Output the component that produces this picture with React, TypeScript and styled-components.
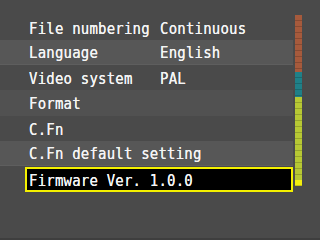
import styled, { createGlobalStyle } from 'styled-components';

const Global = createGlobalStyle`
 html, body { margin: 0; padding: 0; background: #4a4a4a; }
`

const Screen = styled.div`
 width: 320px;
 height: 240px;
 background: #4a4a4a;
 display: flex;
 padding-top: 15px;
 box-sizing: border-box;
 overflow: hidden;
 border-bottom: 2px solid #3e3e3e;
 font-family: 'DejaVu Sans Mono', 'Liberation Mono', monospace;
 font-size: 14px;
 letter-spacing: 0.2px;
 color: #f4f4f4;
`

const List = styled.div`
 width: 293px;
 display: flex;
 flex-direction: column;
`

const Row = styled.div<{ $shade: string; $h: number }>`
 height: ${p => p.$h}px;
 background: ${p => p.$shade};
 display: grid;
 grid-template-columns: 131px 1fr;
 align-items: center;
 padding-left: 29px;
 white-space: pre;
 border-bottom: ${p => p.$shade === '#575757' ? '1px solid #5e5e5e' : 'none'};
 box-sizing: border-box;
`

const Text = styled.span`
 display: inline-block;
 transform: scaleY(1.18);
 transform-origin: left center;
 text-shadow: 0 0 0.5px #ffffff;
`

const Selected = styled.div`
 margin-left: 25px;
 width: 268px;
 height: 25px;
 margin-top: 1px;
 box-sizing: border-box;
 border: 2px solid #f4f000;
 background: #000;
 padding-left: 2px;
 display: flex;
 align-items: center;
 white-space: pre;
`

const Scroll = styled.div`
 margin-left: 2px;
 width: 7px;
 display: flex;
 flex-direction: column;
`

const Seg = styled.div<{ $color: string; $h: number }>`
 height: ${p => p.$h}px;
 background: repeating-linear-gradient(
  to bottom,
  ${p => p.$color} 0px,
  ${p => p.$color} 5px,
  rgba(0, 0, 0, 0.18) 5px,
  rgba(0, 0, 0, 0.18) 6px
 );
 background-color: ${p => p.$color};
`

const rows = [
  { label: 'File numbering', value: 'Continuous', shade: '#4a4a4a', h: 25 },
  { label: 'Language', value: 'English', shade: '#575757', h: 25 },
  { label: 'Video system', value: 'PAL', shade: '#4a4a4a', h: 25 },
  { label: 'Format', value: '', shade: '#515151', h: 26 },
  { label: 'C.Fn', value: '', shade: '#4a4a4a', h: 25 },
  { label: 'C.Fn default setting', value: '', shade: '#575757', h: 25 },
]

const App = () => {
  return (
    <>
      <Global />
      <Screen>
        <List>
          {rows.map(r => (
            <Row key={r.label} $shade={r.shade} $h={r.h}>
              <Text>{r.label}</Text>
              <Text>{r.value}</Text>
            </Row>
          ))}
          <Selected>
            <Text>Firmware Ver. 1.0.0</Text>
          </Selected>
        </List>
        <Scroll>
          <Seg $color="#a65a3c" $h={57} />
          <Seg $color="#1f8088" $h={25} />
          <Seg $color="#b7c834" $h={83} />
          <Seg $color="#f2ee10" $h={6} />
        </Scroll>
      </Screen>
    </>
  )
}

export default App
